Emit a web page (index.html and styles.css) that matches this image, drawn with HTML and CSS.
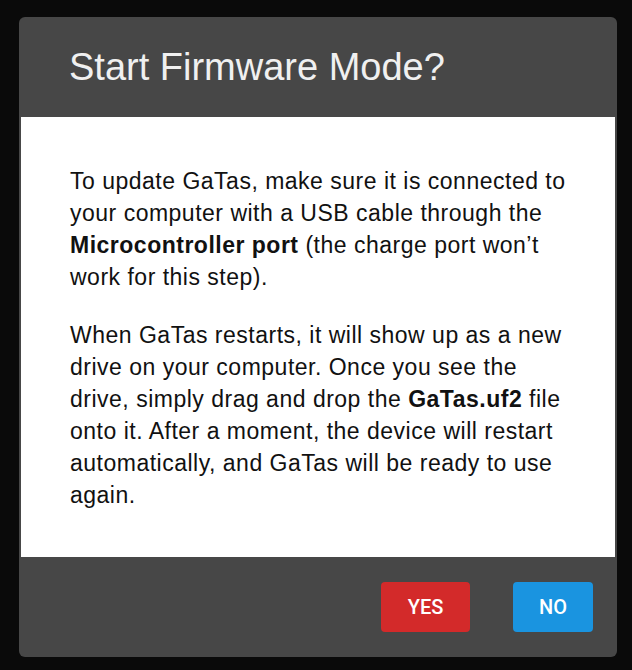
FILE: index.html
```html
<!DOCTYPE html>
<html>
<head>
    <meta name='viewport' content='width=device-width, initial-scale=1'>
    <title>Start Firmware Mode?</title>
    <link rel="stylesheet" href="styles.css">
</head>
<body>
    <div class="dialog">
        <div class="dialog-header">
            <h2>Start Firmware Mode?</h2>
        </div>
        <div class="dialog-body">
            <p>To update GaTas, make sure it is connected to your computer with a USB cable through the <b>Microcontroller port</b> (the charge port won’t work for this step).</p>
            <p>When GaTas restarts, it will show up as a new drive on your computer. Once you see the drive, simply drag and drop the <b>GaTas.uf2</b> file onto it. After a moment, the device will restart automatically, and GaTas will be ready to use again.</p>
        </div>
        <div class="dialog-footer">
            <button class="btn btn-yes">Yes</button>
            <button class="btn btn-no">No</button>
        </div>
    </div>
</body>
</html>
```

FILE: styles.css
```css
* {
    box-sizing: border-box;
    margin: 0;
    padding: 0;
}

body {
    font-family: 'Liberation Sans', Arial, sans-serif;
    background: #0a0a0a;
    padding: 17px 15px 13px 19px;
}

.dialog {
    width: 598px;
    background: #474747;
    border-radius: 6px;
    overflow: hidden;
}

.dialog-header {
    height: 100px;
    padding: 0 50px;
    display: flex;
    align-items: center;
}

h2 {
    font-size: 38px;
    font-weight: normal;
    color: #f0f0f0;
}

.dialog-body {
    background: #fff;
    margin: 0 2px;
    height: 440px;
    padding: 48px 40px 0 49px;
    color: #111;
    font-size: 23px;
    line-height: 32px;
    letter-spacing: 0.5px;
}

.dialog-body p + p {
    margin-top: 26px;
}

.dialog-body b {
    font-weight: 600;
}

.dialog-footer {
    height: 100px;
    padding: 0 24px;
    display: flex;
    justify-content: flex-end;
    align-items: center;
    gap: 43px;
}

.btn {
    height: 50px;
    border: none;
    border-radius: 4px;
    color: #fff;
    font-family: Roboto, 'Liberation Sans', sans-serif;
    font-size: 20px;
    font-weight: 500;
    text-transform: uppercase;
    cursor: pointer;
}

.btn-yes {
    width: 89px;
    background: #d32a2a;
}

.btn-no {
    width: 80px;
    background: #1a94e0;
}
```
